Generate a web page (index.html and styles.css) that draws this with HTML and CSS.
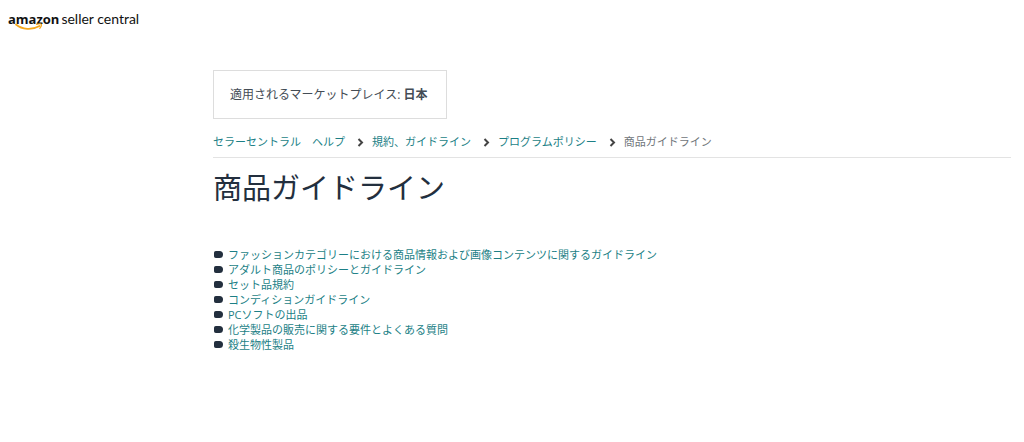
FILE: index.html
```html
<!DOCTYPE html>
<html lang="ja">
<head>
  <meta charset="UTF-8">
  <meta name="viewport" content="width=device-width, initial-scale=1.0">
  <title>商品ガイドライン - Amazon Seller Central</title>
  <link rel="stylesheet" href="styles.css">
</head>
<body>

  <!-- Header -->
  <header class="header">
    <a class="logo" href="#">
      <span class="logo-brand">amazon
        <svg class="logo-smile" viewBox="0 0 28 8" aria-hidden="true">
          <path d="M1 1.5C7 6.6 17 7.4 24.5 3" fill="none" stroke="#f5a81c" stroke-width="1.8" stroke-linecap="round"/>
          <path d="M21.5 1.4C24 .7 26 .8 26.3 1.3C26.6 2 26 4 24.8 5.4" fill="none" stroke="#f5a81c" stroke-width="1.2" stroke-linecap="round"/>
        </svg>
      </span>
      <span class="logo-product">seller central</span>
    </a>
  </header>

  <!-- Help Content -->
  <main class="content">
    <div class="marketplace">適用されるマーケットプレイス: <strong>日本</strong></div>

    <nav class="breadcrumb">
      <a href="#">セラーセントラル　ヘルプ</a>
      <svg class="chevron" viewBox="0 0 7 9" aria-hidden="true"><path d="M1.5 1L5 4.5L1.5 8"/></svg>
      <a href="#">規約、ガイドライン</a>
      <svg class="chevron" viewBox="0 0 7 9" aria-hidden="true"><path d="M1.5 1L5 4.5L1.5 8"/></svg>
      <a href="#">プログラムポリシー</a>
      <svg class="chevron" viewBox="0 0 7 9" aria-hidden="true"><path d="M1.5 1L5 4.5L1.5 8"/></svg>
      <span class="current">商品ガイドライン</span>
    </nav>

    <h1>商品ガイドライン</h1>

    <ul class="topics">
      <li><a href="#">ファッションカテゴリーにおける商品情報および画像コンテンツに関するガイドライン</a></li>
      <li><a href="#">アダルト商品のポリシーとガイドライン</a></li>
      <li><a href="#">セット品規約</a></li>
      <li><a href="#">コンディションガイドライン</a></li>
      <li><a href="#">PCソフトの出品</a></li>
      <li><a href="#">化学製品の販売に関する要件とよくある質問</a></li>
      <li><a href="#">殺生物性製品</a></li>
    </ul>
  </main>

</body>
</html>
```
FILE: styles.css
```css
body {
  background-color: #fff;
  color: #232f3e;
  font-family: "Open Sans", "Noto Sans CJK JP", sans-serif;
  font-size: 11px;
  margin: 0;
}

a {
  color: #1c7f86;
  text-decoration: none;
}

a:hover {
  text-decoration: underline;
}

.header {
  padding: 9px 8px 8px;
}

.logo {
  display: inline-flex;
  align-items: baseline;
  gap: 2px;
  color: #111;
  font-size: 13px;
  line-height: 20px;
}

.logo-brand {
  position: relative;
  font-weight: 700;
}

/* Arrow under the brand name */
.logo-smile {
  position: absolute;
  left: 7px;
  bottom: -2px;
  width: 28px;
  height: 8px;
}

.logo-product {
  font-family: "Lato", sans-serif;
  font-size: 14px;
}

.content {
  padding: 33px 13px 40px 213px;
}

.marketplace {
  display: inline-block;
  padding: 15px 19px 14px 16px;
  border: 1px solid #ddd;
  color: #444c55;
  font-size: 12px;
  line-height: 18px;
}

.breadcrumb {
  display: flex;
  align-items: center;
  padding: 14px 0 6px;
  border-bottom: 1px solid #e3e3e3;
  line-height: 18px;
}

.breadcrumb .current {
  color: #70757a;
}

.chevron {
  width: 7px;
  height: 9px;
  margin: 0 8px 0 12px;
  fill: none;
  stroke: #444;
  stroke-width: 2;
}

h1 {
  margin: 9px 0 39px;
  font-size: 29px;
  font-weight: 400;
  line-height: 41px;
}

.topics {
  margin: 0;
  padding: 0;
  list-style: none;
  line-height: 15px;
}

.topics li {
  display: flex;
  align-items: center;
  gap: 5px;
}

/* Tag-shaped bullet */
.topics li::before {
  content: "";
  width: 9px;
  height: 7px;
  margin-left: 1px;
  background-color: #232f3e;
  border-radius: 2px 4px 4px 2px;
}
```
